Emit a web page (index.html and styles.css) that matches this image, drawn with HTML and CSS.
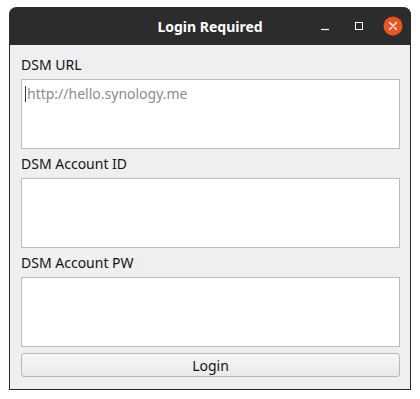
FILE: index.html
```html
<!DOCTYPE html>
<html>
<head>
<title>Login Required</title>
<link rel="stylesheet" href="styles.css">
</head>
<body>

<div class="window">
  <div class="titlebar">
    <div></div>
    <div class="title">Login Required</div>
    <div class="controls">
      <span class="ctl">
        <svg width="10" height="10" viewBox="0 0 10 10"><path d="M1 8.5h8" stroke="#fff" stroke-width="1.2"/></svg>
      </span>
      <span class="ctl">
        <svg width="10" height="10" viewBox="0 0 10 10"><rect x="1.5" y="1.5" width="7" height="7" fill="none" stroke="#fff" stroke-width="1"/></svg>
      </span>
      <span class="ctl">
        <svg width="20" height="20" viewBox="0 0 20 20">
          <circle cx="10" cy="10" r="9.5" fill="#e95420"/>
          <path d="M6.5 6.5l7 7M13.5 6.5l-7 7" stroke="#fff" stroke-width="1.4" stroke-linecap="round"/>
        </svg>
      </span>
    </div>
  </div>

  <div class="content">
    <label for="url">DSM URL</label>
    <div class="field"><span class="caret"></span><span class="placeholder">http://hello.synology.me</span></div>

    <label for="id">DSM Account ID</label>
    <div class="field"></div>

    <label for="pw">DSM Account PW</label>
    <div class="field"></div>

    <button class="login">Login</button>
  </div>
</div>

</body>
</html>
```

FILE: styles.css
```css
body {
  margin: 0;
  padding: 7px 0 0 9px;
  background-color: #ffffff;
  font-family: 'Noto Sans', 'Open Sans', sans-serif;
  font-size: 14px;
  color: #141414;
}

.window {
  width: 400px;
  border: 1px solid #2b2b2b;
  border-top: none;
  border-radius: 8px 8px 0 0;
  background-color: #efefef;
}

.titlebar {
  display: grid;
  grid-template-columns: 1fr auto 1fr;
  align-items: center;
  height: 38px;
  margin: 0 -1px;
  background-color: #2c2c2c;
  border-radius: 8px 8px 0 0;
}

.title {
  color: #ffffff;
  font-weight: bold;
  font-size: 14px;
}

.controls {
  display: flex;
  justify-content: flex-end;
  padding-right: 1px;
}

.ctl {
  width: 34px;
  height: 38px;
  display: flex;
  align-items: center;
  justify-content: center;
}

.content {
  display: flex;
  flex-direction: column;
  padding: 11px 10px 12px 11px;
}

label {
  display: block;
  line-height: 18px;
  margin-bottom: 5px;
}

.field {
  background-color: #ffffff;
  border: 1px solid #bcbcbc;
  margin-bottom: 6px;
  display: flex;
  align-items: flex-start;
  padding: 5px 3px;
  height: 58px;
}

.caret {
  width: 1px;
  height: 16px;
  margin-top: 1px;
  background-color: #333;
}

.placeholder {
  color: #8c8c8c;
  line-height: 18px;
  margin-left: 1px;
}

.login {
  height: 24px;
  border: 1px solid #b8b8b8;
  border-radius: 3px;
  background: linear-gradient(#f7f7f7, #e9e9e9);
  font-family: inherit;
  font-size: 14px;
  color: #141414;
  padding: 0;
}
```
